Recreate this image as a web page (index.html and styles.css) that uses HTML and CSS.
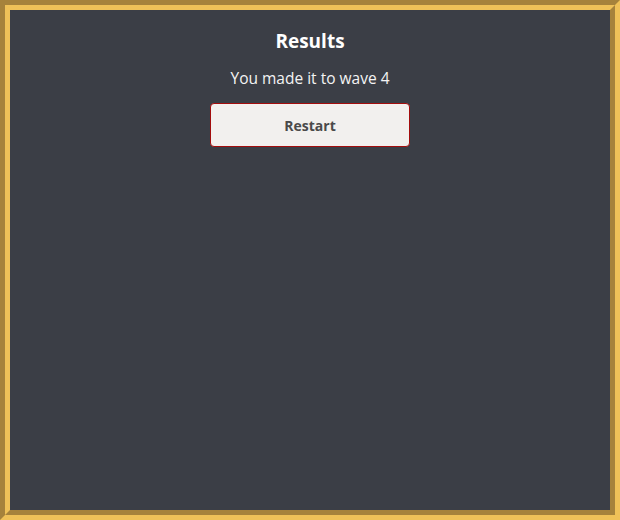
FILE: index.html
```html
<!DOCTYPE html>
<html>
<head>
<meta charset="utf-8">
<link rel="stylesheet" href="styles.css">
</head>
<body>
<div class="frame">
  <div class="inner">
    <h1 class="title">Results</h1>
    <p class="message">You made it to wave 4</p>
    <button class="restart">Restart</button>
  </div>
</div>
</body>
</html>
```
FILE: styles.css
```css
html, body {
  margin: 0;
  padding: 0;
}
body {
  width: 620px;
  height: 520px;
  font-family: "Open Sans", "DejaVu Sans", sans-serif;
}
.frame {
  box-sizing: border-box;
  width: 620px;
  height: 520px;
  border-style: solid;
  border-width: 5px;
  border-color: #a6823b #efc158 #efc158 #a6823b;
}
.inner {
  box-sizing: border-box;
  height: 100%;
  border-style: solid;
  border-width: 5px;
  border-color: #efc158 #a6823b #a6823b #efc158;
  background: #3b3e46;
  display: flex;
  flex-direction: column;
  align-items: center;
  padding-top: 17px;
}
.title {
  margin: 0;
  font-size: 19px;
  font-weight: 700;
  color: #ffffff;
  line-height: 28px;
}
.message {
  margin: 11px 0 0;
  font-size: 15.5px;
  color: #f4f4f4;
  line-height: 24px;
}
.restart {
  margin-top: 13px;
  box-sizing: border-box;
  width: 200px;
  height: 44px;
  background: #f2f0ee;
  border: 1px solid #a30d0d;
  border-radius: 4px;
  font-family: inherit;
  font-size: 14px;
  font-weight: 700;
  color: #4a4a4a;
  cursor: pointer;
}
```
